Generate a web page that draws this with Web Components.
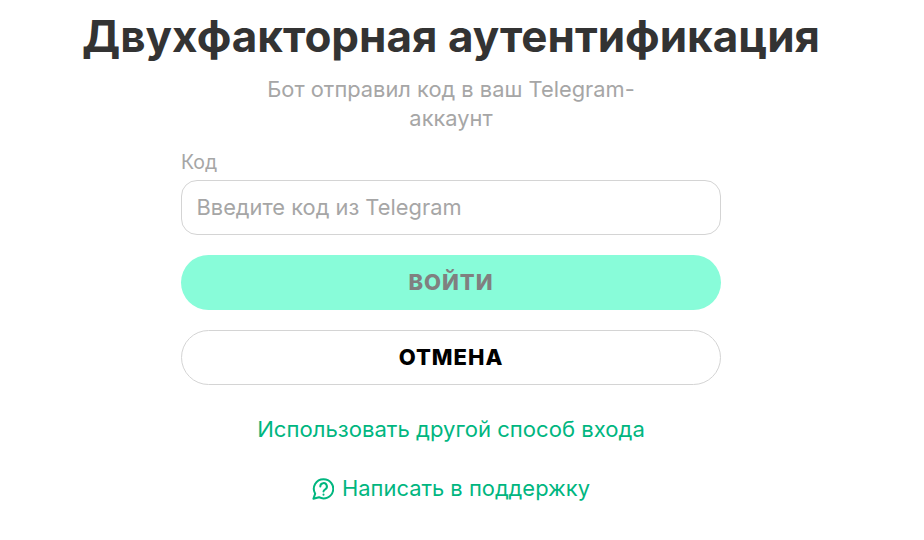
<!DOCTYPE html>
<html lang="ru"><head><meta charset="utf-8"><style>html,body{margin:0;background:#fff;height:100%;overflow:hidden}</style></head><body>
<two-factor-form></two-factor-form>
<template id="t-form"><style>
:host{display:flex;flex-direction:column;align-items:center;width:902px;font-family:Inter,"Noto Sans",sans-serif}
h1{margin:11px 0 0;font-size:44px;line-height:50px;font-weight:700;color:#333;white-space:nowrap}
p{margin:14px 0 0;width:400px;text-align:center;font-size:21.85px;line-height:29px;color:#a6a6a6;font-weight:400}
.col{width:540px;display:flex;flex-direction:column;margin-top:18px}
</style>
<h1>Двухфакторная аутентификация</h1>
<p>Бот отправил код в ваш Telegram-аккаунт</p>
<div class="col">
<code-field label="Код" placeholder="Введите код из Telegram"></code-field>
<pill-button kind="primary">ВОЙТИ</pill-button>
<pill-button kind="ghost">ОТМЕНА</pill-button>
</div>
<green-link style="margin-top:30px">Использовать другой способ входа</green-link>
<green-link icon style="margin-top:30px">Написать в поддержку</green-link>
</template>
<template id="t-field"><style>
:host{display:block;font-family:inherit}
label{display:block;font-size:19.5px;line-height:22px;color:#a6a6a6;margin-bottom:7px}
input{box-sizing:border-box;width:100%;height:55px;border:1px solid #d4d4d4;border-radius:16px;padding:0 14.5px 2px;font:400 21.85px Inter,"Noto Sans",sans-serif;color:#333;background:#fff;outline:none}
input::placeholder{color:#a6a6a6;opacity:1}
</style><label for="i"></label><input id="i"></template>
<template id="t-btn"><style>
:host{display:flex;align-items:center;justify-content:center;box-sizing:border-box;height:55px;padding-bottom:2px;border-radius:28px;font-size:22px;font-weight:800;letter-spacing:1px}
:host([kind=primary]){margin-top:20px;background:#88fcd9;color:#808080}
:host([kind=ghost]){margin-top:20px;background:#fff;border:1px solid #d4d4d4;color:#000}
</style><slot></slot></template>
<template id="t-link"><style>
:host{display:flex;align-items:center;gap:8px;font-size:22.1px;line-height:29px;color:#00b67f;white-space:nowrap}
:host([icon]){font-size:21.9px}
svg{width:22px;height:22px;flex:none}
</style><svg viewBox="0 0 22 22" fill="none" stroke="#00b67f" stroke-width="2" stroke-linecap="round" stroke-linejoin="round" hidden><path d="M11.5 1.2a9.6 9.6 0 1 1-4.5 18L1.4 20.8l1.8-5.1A9.6 9.6 0 0 1 11.5 1.2z"/><path d="M8.3 8.4a3.3 3.3 0 1 1 4.9 2.9c-1 .6-1.7 1.1-1.7 2.2"/><path d="M11.5 16.6v.1"/></svg><slot></slot></template>
<script>
const mk=(name,id,init)=>customElements.define(name,class extends HTMLElement{constructor(){super();this.attachShadow({mode:"open"}).appendChild(document.getElementById(id).content.cloneNode(true));}connectedCallback(){init&&init(this)}});
mk("code-field","t-field",e=>{e.shadowRoot.querySelector("label").textContent=e.getAttribute("label");e.shadowRoot.querySelector("input").placeholder=e.getAttribute("placeholder")});
mk("pill-button","t-btn");
mk("green-link","t-link",e=>{if(e.hasAttribute("icon"))e.shadowRoot.querySelector("svg").removeAttribute("hidden");else e.shadowRoot.querySelector("svg").style.display="none"});
mk("two-factor-form","t-form");
</script></body></html>
